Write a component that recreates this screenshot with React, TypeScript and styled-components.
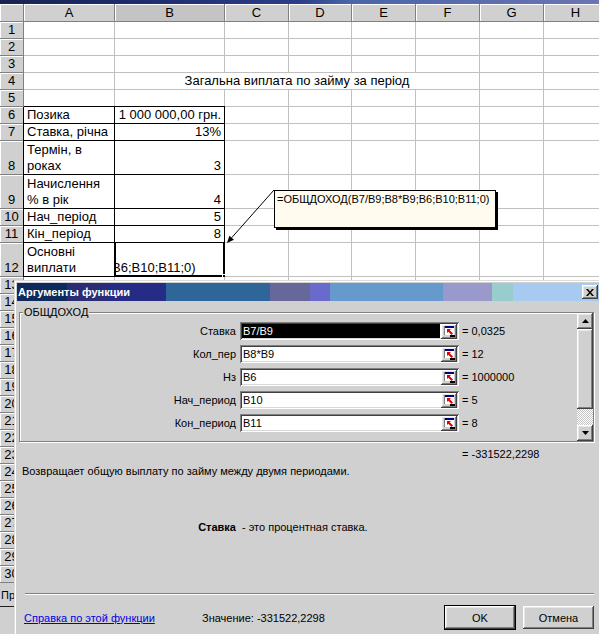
import React from 'react';
import styled, { createGlobalStyle, css } from 'styled-components';

const GRAY = '#d0d0d0';
const SHEET_FONT = '"Liberation Sans", Arial, sans-serif';
const UI_FONT = '"Liberation Sans", Arial, sans-serif';
const COLS = '24px 91px 110px 64px 63px 64px 64px 64px 64px';
const LETTERS = ['A', 'B', 'C', 'D', 'E', 'F', 'G', 'H'];

type Align = 'left' | 'right' | 'center';

interface CellSpec {
  text?: string;
  align?: Align;
  span?: number;
  boxed?: boolean;
  active?: boolean;
}

interface RowSpec {
  n: number;
  tall?: boolean;
  cells: CellSpec[];
}

const empty = (count: number): CellSpec[] => Array.from({ length: count }, () => ({}));

const pair = (label: string, value: string): CellSpec[] => [
  { text: label, boxed: true },
  { text: value, align: 'right', boxed: true },
  ...empty(6),
];

const ROWS: RowSpec[] = [
  { n: 1, cells: empty(8) },
  { n: 2, cells: empty(8) },
  { n: 3, cells: empty(8) },
  {
    n: 4,
    cells: [{}, { text: 'Загальна виплата по займу за період', align: 'center', span: 5 }, {}, {}],
  },
  { n: 5, cells: empty(8) },
  { n: 6, cells: pair('Позика', '1 000 000,00 грн.') },
  { n: 7, cells: pair('Ставка, річна', '13%') },
  { n: 8, tall: true, cells: pair('Термін, в\nроках', '3') },
  { n: 9, tall: true, cells: pair('Начислення\n% в рік', '4') },
  { n: 10, cells: pair('Нач_період', '5') },
  { n: 11, cells: pair('Кін_період', '8') },
  {
    n: 12,
    tall: true,
    cells: [
      { text: 'Основні\nвиплати', boxed: true },
      { text: 'B6;B10;B11;0)', boxed: true, active: true },
      ...empty(6),
    ],
  },
  ...Array.from({ length: 18 }, (_, i) => ({ n: 13 + i, cells: empty(8) })),
];

const ARGS = [
  { name: 'Ставка', ref: 'B7/B9', value: '= 0,0325', selected: true },
  { name: 'Кол_пер', ref: 'B8*B9', value: '= 12' },
  { name: 'Нз', ref: 'B6', value: '= 1000000' },
  { name: 'Нач_период', ref: 'B10', value: '= 5' },
  { name: 'Кон_период', ref: 'B11', value: '= 8' },
];

const GlobalStyle = createGlobalStyle`
  *, *::before, *::after { box-sizing: border-box; }
  html, body { margin: 0; padding: 0; background: ${GRAY}; overflow: hidden; }
`;

const raised = css`
  background: ${GRAY};
  box-shadow: inset -1px -1px #404040, inset 1px 1px #fff, inset -2px -2px #808080,
    inset 2px 2px #e6e6e6;
`;

const sunken = css`
  box-shadow: inset 1px 1px #808080, inset -1px -1px #fff, inset 2px 2px #404040,
    inset -2px -2px #d8d8d8;
`;

const Screen = styled.div`
  position: relative;
  width: 599px;
  height: 634px;
  overflow: hidden;
  background: ${GRAY};
  font-family: ${SHEET_FONT};
  font-size: 13px;
  color: #000;
`;

const TopStrip = styled.div`
  height: 4px;
  background: linear-gradient(
    to right,
    #19244f 0,
    #1e2a6c 130px,
    #2c3f8a 300px,
    #4a65a8 350px,
    #6c74b4 599px
  );
`;

const Sheet = styled.div`
  display: flex;
  flex-direction: column;
`;

const HeaderRow = styled.div`
  display: grid;
  grid-template-columns: ${COLS};
  height: 18px;
`;

const Corner = styled.div`
  background: ${GRAY};
  border-right: 1px solid #808080;
  border-bottom: 1px solid #808080;
  box-shadow: inset 1px 1px #fff;
`;

const ColHead = styled.div<{ $active?: boolean }>`
  background: ${p => (p.$active ? '#c4c4c4' : GRAY)};
  border-right: 1px solid #808080;
  border-bottom: 1px solid #808080;
  box-shadow: inset 1px 1px #fff;
  text-align: center;
  line-height: 17px;
`;

const SheetRow = styled.div<{ $tall?: boolean }>`
  display: grid;
  grid-template-columns: ${COLS};
  height: ${p => (p.$tall ? 34 : 17)}px;
`;

const RowHead = styled.div`
  display: flex;
  align-items: flex-end;
  justify-content: center;
  background: ${GRAY};
  border-right: 1px solid #808080;
  border-bottom: 1px solid #808080;
  box-shadow: inset 1px 1px #fff;
  line-height: 16px;
`;

interface CellProps {
  $span: number;
  $align: Align;
  $boxed?: boolean;
  $top?: boolean;
  $left?: boolean;
  $active?: boolean;
}

const cellShadow = (p: CellProps) => {
  const list: string[] = [];
  if (p.$top) list.push('0 -1px 0 #000');
  if (p.$left || p.$active) list.push('-1px 0 0 #000');
  if (p.$active) list.push('inset 1px 0 0 #000', 'inset -1px -1px 0 #000');
  return list.length ? list.join(', ') : 'none';
};

const Cell = styled.div<CellProps>`
  grid-column: span ${p => p.$span};
  position: relative;
  display: flex;
  flex-direction: column;
  justify-content: flex-end;
  align-items: ${p =>
    p.$align === 'right' ? 'flex-end' : p.$align === 'center' ? 'center' : 'flex-start'};
  text-align: ${p => p.$align};
  padding: 0 3px 0 3px;
  background: #fff;
  border-right: 1px solid ${p => (p.$boxed ? '#000' : '#c0c0c0')};
  border-bottom: 1px solid ${p => (p.$boxed ? '#000' : '#c0c0c0')};
  white-space: pre-line;
  line-height: 16px;
  box-shadow: ${cellShadow};

  ${p =>
    p.$active &&
    css`
      padding: 0 0 0 1px;
      &::after {
        content: '';
        position: absolute;
        right: -3px;
        bottom: -3px;
        width: 5px;
        height: 5px;
        background: #000;
        border: 1px solid #fff;
      }
    `}
`;

const EditClip = styled.div`
  width: 100%;
  overflow: hidden;
`;

const EditText = styled.div`
  margin-left: -4px;
  white-space: nowrap;
`;

const TabBar = styled.div`
  height: 24px;
  display: flex;
  align-items: center;
  padding-left: 1px;
  font: 11px ${UI_FONT};
  border-bottom: 1px solid #202020;
`;

const Comment = styled.div`
  position: absolute;
  left: 274px;
  top: 190px;
  width: 222px;
  height: 38px;
  padding: 1px 2px;
  background: #fffbef;
  border: 1px solid #000;
  box-shadow: 2px 2px 0 #000;
  font: 11px ${UI_FONT};
  line-height: 14px;
  white-space: nowrap;
`;

const CommentArrow = styled.svg`
  position: absolute;
  left: 222px;
  top: 186px;
`;

const Dialog = styled.div`
  position: absolute;
  left: 14px;
  top: 280px;
  width: 588px;
  height: 360px;
  padding: 2px;
  display: flex;
  flex-direction: column;
  background: ${GRAY};
  border-top: 1px solid #dcdcdc;
  border-left: 1px solid #dcdcdc;
  box-shadow: inset 1px 1px #fff;
  font: 11px ${UI_FONT};
`;

const TitleBar = styled.div`
  height: 18px;
  display: flex;
  align-items: center;
  padding-left: 1px;
  background: linear-gradient(
    to right,
    #0e2a5c 0 50px,
    #2a2c74 50px 91px,
    #262c86 91px 149px,
    #2f6699 149px 253px,
    #66689a 253px 293px,
    #6a6acc 293px 313px,
    #6699cc 313px 426px,
    #9999cc 426px 475px,
    #99cccc 475px 496px,
    #a6caf0 496px
  );
`;

const Title = styled.span`
  color: #fff;
  font-weight: 700;
  font-size: 11px;
`;

const CloseButton = styled.div`
  ${raised};
  margin-left: auto;
  margin-right: 2px;
  width: 16px;
  height: 14px;
  display: flex;
  align-items: center;
  justify-content: center;
`;

const DialogBody = styled.div`
  display: flex;
  flex-direction: column;
  padding: 0 6px 0 2px;
`;

const GroupBox = styled.div`
  position: relative;
  margin-top: 11px;
  height: 130px;
  display: flex;
  border: 1px solid #808080;
  box-shadow: inset 1px 1px #fff, 1px 1px #fff;
`;

const GroupTitle = styled.span`
  position: absolute;
  top: -7px;
  left: 3px;
  padding: 0 1px;
  background: ${GRAY};
  line-height: 13px;
`;

const ArgList = styled.div`
  flex: 1;
  display: flex;
  flex-direction: column;
  gap: 5px;
  padding-top: 9px;
`;

const ArgRow = styled.div`
  display: grid;
  grid-template-columns: 218px 219px 1fr;
  column-gap: 2px;
  height: 18px;
`;

const ArgLabel = styled.span`
  text-align: right;
  padding-right: 2px;
  line-height: 18px;
`;

const RefField = styled.div`
  display: flex;
  padding: 2px;
  background: #fff;
  ${sunken};
`;

const RefText = styled.span<{ $selected?: boolean }>`
  flex: 1;
  padding-left: 1px;
  margin-right: 1px;
  line-height: 14px;
  background: ${p => (p.$selected ? '#000' : 'transparent')};
  color: ${p => (p.$selected ? '#fff' : '#000')};
`;

const CollapseButton = styled.div`
  ${raised};
  width: 16px;
  height: 15px;
  margin-bottom: -1px;
  display: flex;
  align-items: center;
  justify-content: center;
`;

const ArgValue = styled.span`
  padding-left: 1px;
  line-height: 18px;
  white-space: nowrap;
`;

const ScrollBar = styled.div`
  width: 16px;
  display: flex;
  flex-direction: column;
`;

const ScrollButton = styled.div`
  ${raised};
  height: 16px;
  display: flex;
  align-items: center;
  justify-content: center;
`;

const Thumb = styled.div`
  ${raised};
  height: 80px;
`;

const Track = styled.div`
  flex: 1;
  background: repeating-conic-gradient(#fff 0 25%, #c4c4c4 0 50%) 0 0 / 2px 2px;
`;

const ResultLine = styled.div`
  margin-top: 5px;
  padding-left: 443px;
  line-height: 14px;
`;

const Description = styled.div`
  margin-top: 3px;
  padding-left: 3px;
  line-height: 14px;
`;

const ArgHelp = styled.div`
  margin-top: 42px;
  display: grid;
  grid-template-columns: 217px 1fr;
  column-gap: 6px;
  line-height: 14px;
`;

const HelpName = styled.b`
  text-align: right;
`;

const Separator = styled.div`
  margin-top: 59px;
  margin-left: 6px;
  height: 2px;
  border-top: 1px solid #808080;
  border-bottom: 1px solid #fff;
`;

const Footer = styled.div`
  margin-top: 11px;
  height: 23px;
  display: flex;
  align-items: center;
  padding-left: 5px;
`;

const HelpLink = styled.span`
  width: 178px;
  color: #0000e0;
  text-decoration: underline;
`;

const ValueText = styled.span`
  flex: 1;
`;

const DialogButton = styled.div<{ $primary?: boolean; $w: number }>`
  ${raised};
  width: ${p => p.$w}px;
  height: 23px;
  margin-left: 8px;
  display: flex;
  align-items: center;
  justify-content: center;
  ${p =>
    p.$primary &&
    css`
      box-shadow: 0 0 0 1px #000, inset -1px -1px #404040, inset 1px 1px #fff,
        inset -2px -2px #808080, inset 2px 2px #e6e6e6;
    `}
`;

const CollapseIcon = () => (
  <svg width="11" height="11" viewBox="0 0 11 11">
    <rect x="0" y="0" width="10" height="9" fill="#fff" />
    <rect x="0" y="0" width="10" height="2" fill="#000080" />
    <rect x="0" y="0" width="1" height="9" fill="#808080" />
    <path d="M3 3h4L5.7 4.3 9 7.6 7.6 9 4.3 5.7 3 7z" fill="#e00000" />
    <rect x="6" y="9" width="5" height="2" fill="#000" />
  </svg>
);

const Triangle = ({ down }: { down?: boolean }) => (
  <svg width="7" height="4" viewBox="0 0 7 4">
    <path d={down ? 'M0 0h7L3.5 4z' : 'M3.5 0L7 4H0z'} fill="#000" />
  </svg>
);

const App = () => (
  <Screen>
    <GlobalStyle />
    <TopStrip />
    <Sheet>
      <HeaderRow>
        <Corner />
        {LETTERS.map(l => (
          <ColHead key={l} $active={l === 'B'}>
            {l}
          </ColHead>
        ))}
      </HeaderRow>
      {ROWS.map(row => (
        <SheetRow key={row.n} $tall={row.tall}>
          <RowHead>{row.n}</RowHead>
          {row.cells.map((c, i) => (
            <Cell
              key={i}
              $span={c.span ?? 1}
              $align={c.align ?? 'left'}
              $boxed={c.boxed}
              $top={c.boxed && row.n === 6}
              $left={c.boxed && i === 0}
              $active={c.active}
            >
              {c.active ? (
                <EditClip>
                  <EditText>{c.text}</EditText>
                </EditClip>
              ) : (
                c.text
              )}
            </Cell>
          ))}
        </SheetRow>
      ))}
      <TabBar>Прогноз</TabBar>
    </Sheet>

    <CommentArrow width="60" height="62" viewBox="0 0 60 62">
      <line x1="52" y1="4" x2="9.6" y2="51.8" stroke="#000" strokeWidth="1" />
      <polygon points="5,57 11.9,53.8 7.4,49.8" fill="#000" />
    </CommentArrow>
    <Comment>=ОБЩДОХОД(B7/B9;B8*B9;B6;B10;B11;0)</Comment>

    <Dialog>
      <TitleBar>
        <Title>Аргументы функции</Title>
        <CloseButton>
          <svg width="8" height="7" viewBox="0 0 8 7">
            <path d="M0 0h2l2 2.5L6 0h2L5 3.5 8 7H6L4 4.5 2 7H0l3-3.5z" fill="#000" />
          </svg>
        </CloseButton>
      </TitleBar>
      <DialogBody>
        <GroupBox>
          <GroupTitle>ОБЩДОХОД</GroupTitle>
          <ArgList>
            {ARGS.map(a => (
              <ArgRow key={a.name}>
                <ArgLabel>{a.name}</ArgLabel>
                <RefField>
                  <RefText $selected={a.selected}>{a.ref}</RefText>
                  <CollapseButton>
                    <CollapseIcon />
                  </CollapseButton>
                </RefField>
                <ArgValue>{a.value}</ArgValue>
              </ArgRow>
            ))}
          </ArgList>
          <ScrollBar>
            <ScrollButton>
              <Triangle />
            </ScrollButton>
            <Thumb />
            <Track />
            <ScrollButton>
              <Triangle down />
            </ScrollButton>
          </ScrollBar>
        </GroupBox>
        <ResultLine>= -331522,2298</ResultLine>
        <Description>Возвращает общую выплату по займу между двумя периодами.</Description>
        <ArgHelp>
          <HelpName>Ставка</HelpName>
          <span>- это процентная ставка.</span>
        </ArgHelp>
        <Separator />
        <Footer>
          <HelpLink>Справка по этой функции</HelpLink>
          <ValueText>Значение: -331522,2298</ValueText>
          <DialogButton $primary $w={70}>
            OK
          </DialogButton>
          <DialogButton $w={71}>Отмена</DialogButton>
        </Footer>
      </DialogBody>
    </Dialog>
  </Screen>
);

export default App;
